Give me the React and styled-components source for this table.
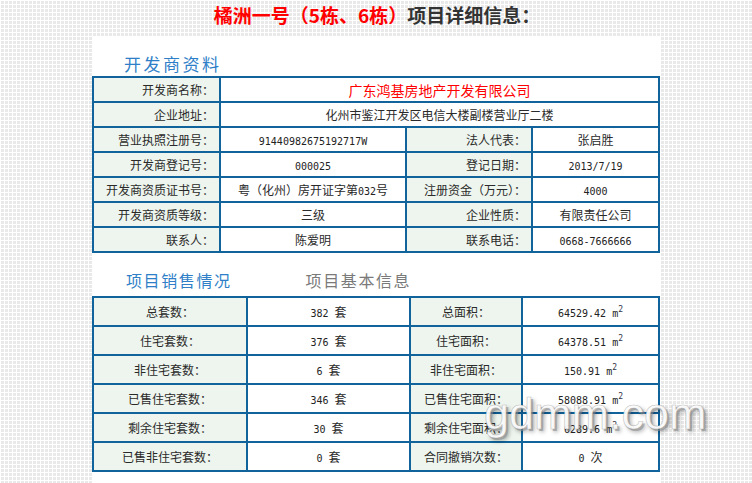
import React from 'react';
import styled, { createGlobalStyle } from 'styled-components';

const GlobalStyle = createGlobalStyle`
  html, body {
    margin: 0;
    padding: 0;
  }
  body {
    font-family: "Noto Sans CJK SC", "Liberation Sans", sans-serif;
    font-size: 12px;
    color: #333;
    background-image:
      linear-gradient(to right, #ffffff 1px, transparent 1px),
      linear-gradient(to bottom, #ffffff 1px, transparent 1px);
    background-size: 4px 4px;
    background-color: #e9e9e9;
    min-height: 483px;
    overflow: hidden;
  }
`;

const Page = styled.div`
  width: 752px;
  height: 483px;
  position: relative;
  overflow: hidden;
`;

const Title = styled.h1`
  margin: 0;
  height: 36px;
  line-height: 30px;
  text-align: center;
  font-size: 19px;
  font-weight: bold;
  color: #333;
  padding-left: 2px;
`;

const Red = styled.span`
  color: #ff0000;
`;

const Panel = styled.div`
  width: 568px;
  margin: 0 auto;
  background: #fff;
  height: 447px;
`;

const HeadRow = styled.div`
  display: flex;
  align-items: center;
  height: ${(p) => p.$h}px;
  padding-left: ${(p) => p.$pad}px;
  padding-top: ${(p) => p.$top || 0}px;
  box-sizing: border-box;
  gap: 74px;
`;

const Heading = styled.span`
  font-size: ${(p) => p.$size || 17}px;
  letter-spacing: ${(p) => p.$ls || 2}px;
  color: ${(p) => (p.$muted ? '#7a7a7a' : '#2f7fc8')};
  line-height: 1;
`;

const Table = styled.table`
  border-collapse: separate;
  border-spacing: 0;
  table-layout: fixed;
  width: 568px;
  border-left: 2px solid #10639b;
  border-top: 2px solid #10639b;
  box-sizing: border-box;
`;

const Row = styled.tr`
  height: ${(p) => p.$h}px;
`;

const Label = styled.td`
  background: #eef5ee;
  border-right: 2px solid #10639b;
  border-bottom: 2px solid #10639b;
  text-align: ${(p) => p.$align || 'right'};
  padding: 0 ${(p) => (p.$align === 'center' ? 0 : 5)}px 0 0;
  white-space: nowrap;
  color: #2a2a2a;
  font-size: 12px;
`;

const Value = styled.td`
  background: #fff;
  border-right: 2px solid #10639b;
  border-bottom: 2px solid #10639b;
  text-align: center;
  padding: 0;
  white-space: nowrap;
  color: ${(p) => (p.$red ? '#ff0000' : '#2a2a2a')};
  font-size: ${(p) => (p.$red ? 14 : 12)}px;
`;

const Num = styled.span`
  font-family: "DejaVu Sans Mono", "Liberation Mono", monospace;
  font-size: 10px;
  color: #222;
  white-space: pre;
`;

const Sup = styled.sup`
  font-family: "DejaVu Sans Mono", monospace;
  font-size: 8px;
  color: #334;
  vertical-align: 5px;
  line-height: 0;
`;

const Watermark = styled.div`
  position: absolute;
  left: 484px;
  top: 388px;
  font-family: "Liberation Sans", Arial, sans-serif;
  font-size: 45px;
  color: rgba(252, 252, 252, 0.95);
  -webkit-text-stroke: 0.6px rgba(150, 150, 150, 0.6);
  text-shadow: 2px 2px 0 rgba(140, 140, 140, 0.6), 3px 3px 4px rgba(0, 0, 0, 0.35);
  pointer-events: none;
`;

const Area = ({ v }) => (
  <>
    <Num>{v} m</Num>
    <Sup>2</Sup>
  </>
);

const Sets = ({ v, unit = '套' }) => (
  <>
    <Num>{`${v} `}</Num>
    {unit}
  </>
);

const devRows = [
  ['营业执照注册号：', <Num>91440982675192717W</Num>, '法人代表：', '张启胜'],
  ['开发商登记号：', <Num>000025</Num>, '登记日期：', <Num>2013/7/19</Num>],
  ['开发商资质证书号：', <>粤（化州）房开证字第<Num>032</Num>号</>, '注册资金（万元）：', <Num>4000</Num>],
  ['开发商资质等级：', '三级', '企业性质：', '有限责任公司'],
  ['联系人：', '陈爱明', '联系电话：', <Num>0668-7666666</Num>],
];

const saleRows = [
  ['总套数：', <Sets v="382" />, '总面积：', <Area v="64529.42" />],
  ['住宅套数：', <Sets v="376" />, '住宅面积：', <Area v="64378.51" />],
  ['非住宅套数：', <Sets v="6" />, '非住宅面积：', <Area v="150.91" />],
  ['已售住宅套数：', <Sets v="346" />, '已售住宅面积：', <Area v="58088.91" />],
  ['剩余住宅套数：', <Sets v="30" />, '剩余住宅面积：', <Area v="6289.6" />],
  ['已售非住宅套数：', <Sets v="0" />, '合同撤销次数：', <Sets v="0" unit="次" />],
];

export default function App() {
  return (
    <Page>
      <GlobalStyle />
      <Title>
        <Red>橘洲一号（5栋、6栋）</Red>项目详细信息：
      </Title>
      <Panel>
        <HeadRow $h={40} $pad={32} $top={14}>
          <Heading $size={17} $ls={2.5}>开发商资料</Heading>
        </HeadRow>
        <Table>
          <colgroup>
            <col style={{ width: 127 }} />
            <col style={{ width: 186 }} />
            <col style={{ width: 126 }} />
            <col />
          </colgroup>
          <tbody>
            <Row $h={25}>
              <Label>开发商名称：</Label>
              <Value colSpan={3} $red>广东鸿基房地产开发有限公司</Value>
            </Row>
            <Row $h={25}>
              <Label>企业地址：</Label>
              <Value colSpan={3}>化州市鉴江开发区电信大楼副楼营业厅二楼</Value>
            </Row>
            {devRows.map((r, i) => (
              <Row $h={25} key={i}>
                <Label>{r[0]}</Label>
                <Value>{r[1]}</Value>
                <Label>{r[2]}</Label>
                <Value>{r[3]}</Value>
              </Row>
            ))}
          </tbody>
        </Table>
        <HeadRow $h={43} $pad={34} $top={10}>
          <Heading $size={16} $ls={1.6}>项目销售情况</Heading>
          <Heading $size={16} $ls={1.6} $muted>项目基本信息</Heading>
        </HeadRow>
        <Table>
          <colgroup>
            <col style={{ width: 154 }} />
            <col style={{ width: 163 }} />
            <col style={{ width: 112 }} />
            <col />
          </colgroup>
          <tbody>
            {saleRows.map((r, i) => (
              <Row $h={29} key={i}>
                <Label $align="center">{r[0]}</Label>
                <Value>{r[1]}</Value>
                <Label $align="center">{r[2]}</Label>
                <Value>{r[3]}</Value>
              </Row>
            ))}
          </tbody>
        </Table>
      </Panel>
      <Watermark>gdmm.com</Watermark>
    </Page>
  );
}
